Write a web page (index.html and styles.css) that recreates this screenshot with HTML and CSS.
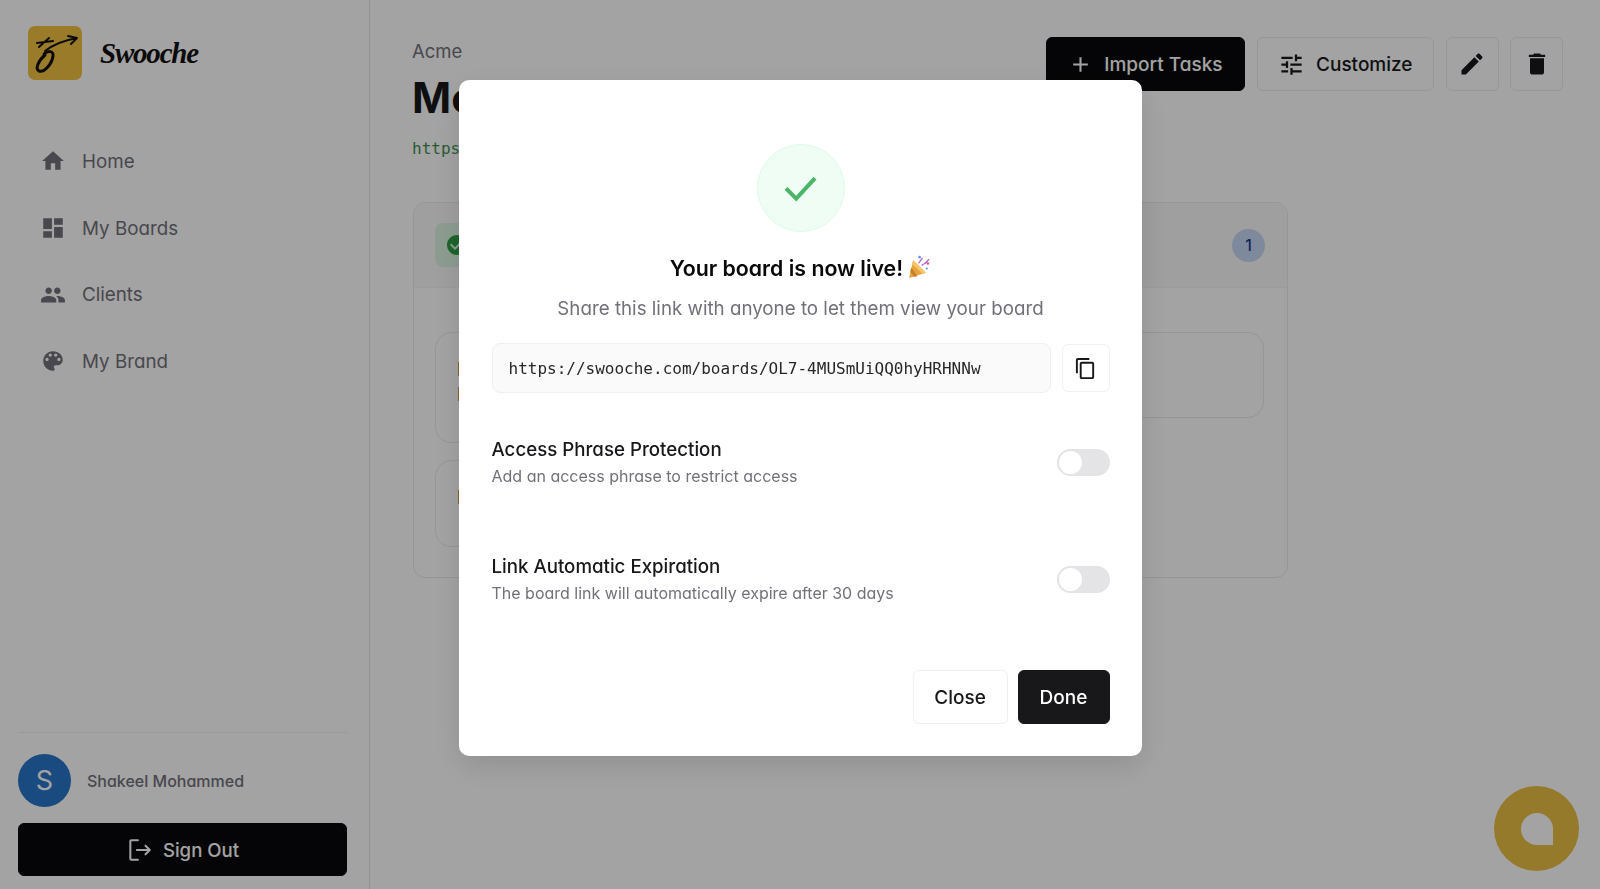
FILE: index.html
```html
<!DOCTYPE html>
<html lang="en">
<head>
    <meta charset="UTF-8">
    <meta name="viewport" content="width=device-width, initial-scale=1.0">
    <title>Swooche</title>
    <link rel="stylesheet" href="styles.css">
</head>
<body>
    <aside class="sidebar">
        <div class="brand">
            <svg class="brand-mark" viewBox="0 0 54 54">
                <rect width="54" height="54" rx="7" fill="#f0c040"/>
                <g fill="none" stroke="#111" stroke-linecap="round" stroke-linejoin="round">
                    <path d="M9 17 L25 15 M11 21 L21 12" stroke-width="2"/>
                    <path d="M17 29 C10 35 7 43 11 45 C16 47 24 38 25 30 C26 25 20 24 16 28" stroke-width="3"/>
                    <path d="M17 25 C26 18 38 14 49 12 M40 10 L49 12 L43 18" stroke-width="2"/>
                </g>
            </svg>
            <span class="brand-name">Swooche</span>
        </div>

        <nav class="nav">
            <a class="nav-item"><svg class="icon" viewBox="0 0 24 24"><path d="M10 20v-6h4v6h5v-8h3L12 3 2 12h3v8z"/></svg>Home</a>
            <a class="nav-item"><svg class="icon" viewBox="0 0 24 24"><path d="M3 13h8V3H3v10zm0 8h8v-6H3v6zm10 0h8V11h-8v10zm0-18v6h8V3h-8z"/></svg>My Boards</a>
            <a class="nav-item"><svg class="icon" viewBox="0 0 24 24"><path d="M16 11c1.66 0 2.99-1.34 2.99-3S17.66 5 16 5c-1.66 0-3 1.34-3 3s1.34 3 3 3zm-8 0c1.66 0 2.99-1.34 2.99-3S9.66 5 8 5C6.34 5 5 6.34 5 8s1.34 3 3 3zm0 2c-2.33 0-7 1.17-7 3.5V19h14v-2.5c0-2.33-4.67-3.5-7-3.5zm8 0c-.29 0-.62.02-.97.05 1.16.84 1.97 1.97 1.97 3.45V19h6v-2.5c0-2.33-4.67-3.5-7-3.5z"/></svg>Clients</a>
            <a class="nav-item"><svg class="icon" viewBox="0 0 24 24"><path d="M12 3c-4.97 0-9 4.03-9 9s4.03 9 9 9c.83 0 1.5-.67 1.5-1.5 0-.39-.15-.74-.39-1.01-.23-.26-.38-.61-.38-.99 0-.83.67-1.5 1.5-1.5H16c2.76 0 5-2.24 5-5 0-4.42-4.03-8-9-8zm-5.5 9c-.83 0-1.5-.67-1.5-1.5S5.67 9 6.5 9 8 9.67 8 10.5 7.33 12 6.5 12zm3-4C8.67 8 8 7.33 8 6.5S8.67 5 9.5 5s1.5.67 1.5 1.5S10.33 8 9.5 8zm5 0c-.83 0-1.5-.67-1.5-1.5S13.67 5 14.5 5s1.5.67 1.5 1.5S15.33 8 14.5 8zm3 4c-.83 0-1.5-.67-1.5-1.5S16.67 9 17.5 9s1.5.67 1.5 1.5-.67 1.5-1.5 1.5z"/></svg>My Brand</a>
        </nav>

        <div class="account">
            <div class="user">
                <span class="avatar">S</span>
                <span class="user-name">Shakeel Mohammed</span>
            </div>
            <button class="btn btn-dark btn-wide">
                <svg class="icon-line" viewBox="0 0 24 24"><path d="M11 3H5a1 1 0 0 0-1 1v16a1 1 0 0 0 1 1h6M10 12h12M18 8l4 4-4 4"/></svg>
                Sign Out
            </button>
        </div>
    </aside>

    <main class="main">
        <header class="board-head">
            <div class="board-info">
                <div class="client">Acme</div>
                <h1 class="board-title">Moodboard</h1>
                <div class="board-link">https://swooche.com/boards/OL7-4MUSmUiQQ0hyHRHNNw</div>
            </div>
            <div class="actions">
                <button class="btn btn-dark"><svg class="icon" viewBox="0 0 24 24"><path d="M19 13h-6v6h-2v-6H5v-2h6V5h2v6h6v2z"/></svg>Import Tasks</button>
                <button class="btn"><svg class="icon icon-tune" viewBox="0 0 24 24"><path d="M3 17v2h6v-2H3zM3 5v2h10V5H3zm10 16v-2h8v-2h-8v-2h-2v6h2zM7 9v2H3v2h4v2h2V9H7zm14 4v-2H11v2h10zm-6-4h2V7h4V5h-4V3h-2v6z"/></svg>Customize</button>
                <button class="btn btn-square"><svg class="icon" viewBox="0 0 24 24"><path d="M3 17.25V21h3.75L17.81 9.94l-3.75-3.75L3 17.25zM20.71 7.04c.39-.39.39-1.02 0-1.41l-2.34-2.34c-.39-.39-1.02-.39-1.41 0l-1.83 1.83 3.75 3.75 1.83-1.83z"/></svg></button>
                <button class="btn btn-square"><svg class="icon" viewBox="0 0 24 24"><path d="M6 19c0 1.1.9 2 2 2h8c1.1 0 2-.9 2-2V7H6v12zM19 4h-3.5l-1-1h-5l-1 1H5v2h14V4z"/></svg></button>
            </div>
        </header>

        <section class="board">
            <div class="board-bar">
                <span class="status"><svg viewBox="0 0 24 24"><path d="M12 2C6.48 2 2 6.48 2 12s4.48 10 10 10 10-4.48 10-10S17.52 2 12 2zm-2 15l-5-5 1.41-1.41L10 14.17l7.59-7.59L19 8l-9 9z"/></svg></span>
                <span class="count">1</span>
            </div>
            <div class="task-columns">
                <div class="task-column">
                    <div class="task task-tall">I<br>I</div>
                    <div class="task task-mid">I</div>
                </div>
                <div class="task-column">
                    <div class="task task-short"></div>
                </div>
            </div>
        </section>
    </main>

    <div class="chat"><span class="chat-bubble"></span></div>

    <div class="overlay">
        <div class="modal">
            <div class="success"><svg viewBox="0 0 24 24"><path d="M3.5 12.5 L9.5 18.5 L20.5 6.5"/></svg></div>
            <h2 class="modal-title">Your board is now live!
                <svg class="party" viewBox="0 0 24 24">
                    <path d="M7 6 L19 18 L3 23 Z" fill="#e8a33d"/>
                    <path d="M7 6 L19 18 L16 19 L5.5 9 Z" fill="#f5c76b"/>
                    <path d="M5 13 L11 21 L8 22 L4 17 Z" fill="#c77f2a"/>
                    <circle cx="13" cy="3" r="1.2" fill="#5b8def"/>
                    <circle cx="21" cy="9" r="1.2" fill="#e0568a"/>
                    <path d="M12 9 C14 7 14 5 16 4 M15 11 C17 9 19 10 22 5" fill="none" stroke="#b565c9" stroke-width="1.3"/>
                    <circle cx="20" cy="14" r="1" fill="#5b8def"/>
                </svg>
            </h2>
            <p class="modal-sub">Share this link with anyone to let them view your board</p>

            <div class="share-row">
                <div class="share-url">https://swooche.com/boards/OL7-4MUSmUiQQ0hyHRHNNw</div>
                <button class="copy-btn"><svg viewBox="0 0 24 24"><path d="M16 1H4c-1.1 0-2 .9-2 2v14h2V3h12V1zm3 4H8c-1.1 0-2 .9-2 2v14c0 1.1.9 2 2 2h11c1.1 0 2-.9 2-2V7c0-1.1-.9-2-2-2zm0 16H8V7h11v14z"/></svg></button>
            </div>

            <div class="option">
                <div>
                    <div class="option-name">Access Phrase Protection</div>
                    <div class="option-desc">Add an access phrase to restrict access</div>
                </div>
                <span class="toggle"></span>
            </div>
            <div class="option">
                <div>
                    <div class="option-name">Link Automatic Expiration</div>
                    <div class="option-desc">The board link will automatically expire after 30 days</div>
                </div>
                <span class="toggle"></span>
            </div>

            <div class="modal-foot">
                <button class="btn btn-close">Close</button>
                <button class="btn btn-done">Done</button>
            </div>
        </div>
    </div>
</body>
</html>
```

FILE: styles.css
```css
* {
    box-sizing: border-box;
}
body {
    margin: 0;
    height: 889px;
    display: flex;
    overflow: hidden;
    background: #fff;
    color: #18181b;
    font-family: Inter, "Noto Sans", sans-serif;
    font-feature-settings: "cv11";
}
button {
    font-family: inherit;
    font-feature-settings: inherit;
}

/* sidebar */
.sidebar {
    width: 370px;
    flex-shrink: 0;
    display: flex;
    flex-direction: column;
    padding: 26px 22px 13px 18px;
    border-right: 1px solid #e4e4e7;
}
.brand {
    display: flex;
    align-items: center;
    gap: 18px;
    padding-left: 10px;
}
.brand-mark {
    width: 54px;
    height: 54px;
}
.brand-name {
    font-family: "Liberation Serif", serif;
    font-style: italic;
    font-weight: 700;
    font-size: 29px;
    letter-spacing: -1.2px;
    color: #111;
}
.nav {
    margin-top: 48px;
    display: flex;
    flex-direction: column;
}
.nav-item {
    height: 66.7px;
    display: flex;
    align-items: center;
    gap: 16px;
    padding-left: 22px;
    font-size: 18.8px;
    color: #71717a;
}
.nav-item .icon {
    width: 26px;
    height: 26px;
    fill: #71717a;
}
.account {
    margin-top: auto;
    border-top: 1px solid #f0f0f2;
    padding-top: 21px;
    display: flex;
    flex-direction: column;
    gap: 16px;
}
.user {
    display: flex;
    align-items: center;
    gap: 16px;
}
.avatar {
    width: 53px;
    height: 53px;
    border-radius: 50%;
    background: #2874c8;
    color: #fff;
    font-size: 27px;
    display: flex;
    align-items: center;
    justify-content: center;
}
.user-name {
    font-size: 16px;
    font-weight: 500;
    color: #71717a;
}

/* buttons */
.btn {
    height: 54px;
    display: inline-flex;
    align-items: center;
    justify-content: center;
    gap: 11px;
    padding: 0 20.5px;
    border: 1px solid #ececee;
    border-radius: 6px;
    background: #fff;
    color: #18181b;
    font-size: 19px;
    font-weight: 500;
}
.btn-dark {
    padding: 0 21.5px;
    background: #09090b;
    border-color: #09090b;
    color: #fff;
}
.btn-wide {
    width: 100%;
    height: 53px;
    font-size: 18.6px;
}
.btn-square {
    width: 53px;
    padding: 0;
}
.btn-square .icon {
    width: 28px;
    height: 28px;
}
.icon {
    width: 25px;
    height: 25px;
    fill: currentColor;
}
.icon-tune {
    width: 27px;
    height: 27px;
}
.icon-line {
    width: 26px;
    height: 26px;
    fill: none;
    stroke: currentColor;
    stroke-width: 1.9;
    stroke-linecap: round;
    stroke-linejoin: round;
}

/* main */
.main {
    flex: 1;
    min-width: 0;
    padding: 37px 37px 0 43px;
}
.board-head {
    display: flex;
    justify-content: space-between;
    align-items: flex-start;
}
.board-info {
    margin-left: -1px;
}
.client {
    font-size: 18.5px;
    color: #71717a;
    line-height: 28px;
}
.board-title {
    margin: 5px 0 0;
    font-size: 42px;
    line-height: 56px;
    font-weight: 700;
}
.board-link {
    margin-top: 13px;
    font-family: "DejaVu Sans Mono", monospace;
    font-size: 16px;
    color: #3f8f4f;
}
.actions {
    display: flex;
    gap: 11.5px;
}
.board {
    width: 875px;
    height: 376px;
    margin-top: 44px;
    border: 1px solid #ebebed;
    border-radius: 12px;
    overflow: hidden;
}
.board-bar {
    height: 85px;
    display: flex;
    align-items: center;
    justify-content: space-between;
    padding: 0 22px 0 21px;
    background: #f9f9fa;
    border-bottom: 1px solid #f4f4f5;
}
.status {
    width: 44px;
    height: 44px;
    border-radius: 8px;
    background: #dcf5e3;
    display: flex;
    align-items: center;
    justify-content: center;
}
.status svg {
    width: 24px;
    height: 24px;
    fill: #2f9e44;
}
.count {
    width: 33px;
    height: 33px;
    border-radius: 50%;
    background: #c7d7f5;
    color: #1e3a8a;
    font-size: 16px;
    font-weight: 500;
    display: flex;
    align-items: center;
    justify-content: center;
}
.task-columns {
    display: flex;
    gap: 20px;
    padding: 44px 23px 0 21px;
}
.task-column {
    flex: 1;
    display: flex;
    flex-direction: column;
    gap: 17px;
}
.task {
    border: 1px solid #ebebed;
    border-radius: 16px;
    padding: 24px 21px;
    font-size: 18px;
    line-height: 25px;
}
.task-tall {
    height: 111px;
}
.task-mid {
    height: 87px;
}
.task-short {
    height: 86px;
}

/* chat launcher */
.chat {
    position: fixed;
    right: 21px;
    bottom: 18px;
    width: 85px;
    height: 85px;
    border-radius: 50%;
    background: #eabf45;
    display: flex;
    align-items: center;
    justify-content: center;
}
.chat-bubble {
    width: 32px;
    height: 32px;
    background: #fff;
    border-radius: 50% 50% 0 50%;
}

/* modal */
.overlay {
    position: fixed;
    inset: 0;
    background: rgba(0, 0, 0, 0.36);
    display: flex;
    justify-content: center;
    align-items: flex-start;
    padding: 80px 0 0;
}
.modal {
    width: 683px;
    height: 676px;
    background: #fff;
    border-radius: 10px;
    padding: 64px 32px 32px 33px;
    display: flex;
    flex-direction: column;
    box-shadow: 0 10px 30px rgba(0, 0, 0, 0.12);
}
.success {
    width: 88px;
    height: 88px;
    margin: 0 auto;
    border-radius: 50%;
    background: #f0fdf4;
    border: 1px solid #dcfce7;
    display: flex;
    align-items: center;
    justify-content: center;
}
.success svg {
    width: 41px;
    height: 41px;
    margin-top: -2px;
    fill: none;
    stroke: #4cb569;
    stroke-width: 2.4;
}
.modal-title {
    margin: 20px 0 0;
    font-size: 21.3px;
    line-height: 32px;
    font-weight: 600;
    text-align: center;
    color: #09090b;
}
.party {
    width: 25px;
    height: 25px;
    margin-left: -2px;
    vertical-align: -3px;
}
.modal-sub {
    margin: 9px 0 0;
    font-size: 18.75px;
    line-height: 32px;
    text-align: center;
    color: #71717a;
}
.share-row {
    display: flex;
    align-items: center;
    gap: 11px;
    margin-top: 18px;
}
.share-url {
    flex: 1;
    height: 50px;
    display: flex;
    align-items: center;
    padding: 0 16px;
    background: #fafafa;
    border: 1px solid #f0f0f2;
    border-radius: 8px;
    font-family: "DejaVu Sans Mono", monospace;
    font-size: 16px;
    color: #27272a;
}
.copy-btn {
    width: 48px;
    height: 48px;
    padding: 0;
    display: flex;
    align-items: center;
    justify-content: center;
    background: #fff;
    border: 1px solid #f0f0f2;
    border-radius: 6px;
}
.copy-btn svg {
    width: 23px;
    height: 23px;
    fill: #18181b;
}
.option {
    height: 117px;
    display: flex;
    align-items: center;
    justify-content: space-between;
    padding-bottom: 16px;
}
.share-row + .option {
    margin-top: 18px;
}
.option-name {
    font-size: 18.7px;
    line-height: 27px;
    font-weight: 500;
    color: #18181b;
}
.option-desc {
    margin-top: 1px;
    font-size: 16px;
    line-height: 24px;
    color: #71717a;
}
.toggle {
    width: 53px;
    height: 27px;
    margin-top: 2px;
    border-radius: 14px;
    background: #e4e4e7;
    display: flex;
    align-items: center;
    padding-left: 2px;
}
.toggle::before {
    content: "";
    width: 23px;
    height: 23px;
    border-radius: 50%;
    background: #fff;
}
.modal-foot {
    margin-top: auto;
    display: flex;
    justify-content: flex-end;
    gap: 10px;
}
.btn-close {
    width: 95px;
    padding: 0;
    border-color: #f0f0f2;
}
.btn-done {
    width: 92px;
    padding: 0;
    background: #18181b;
    border-color: #18181b;
    color: #fff;
}
```
